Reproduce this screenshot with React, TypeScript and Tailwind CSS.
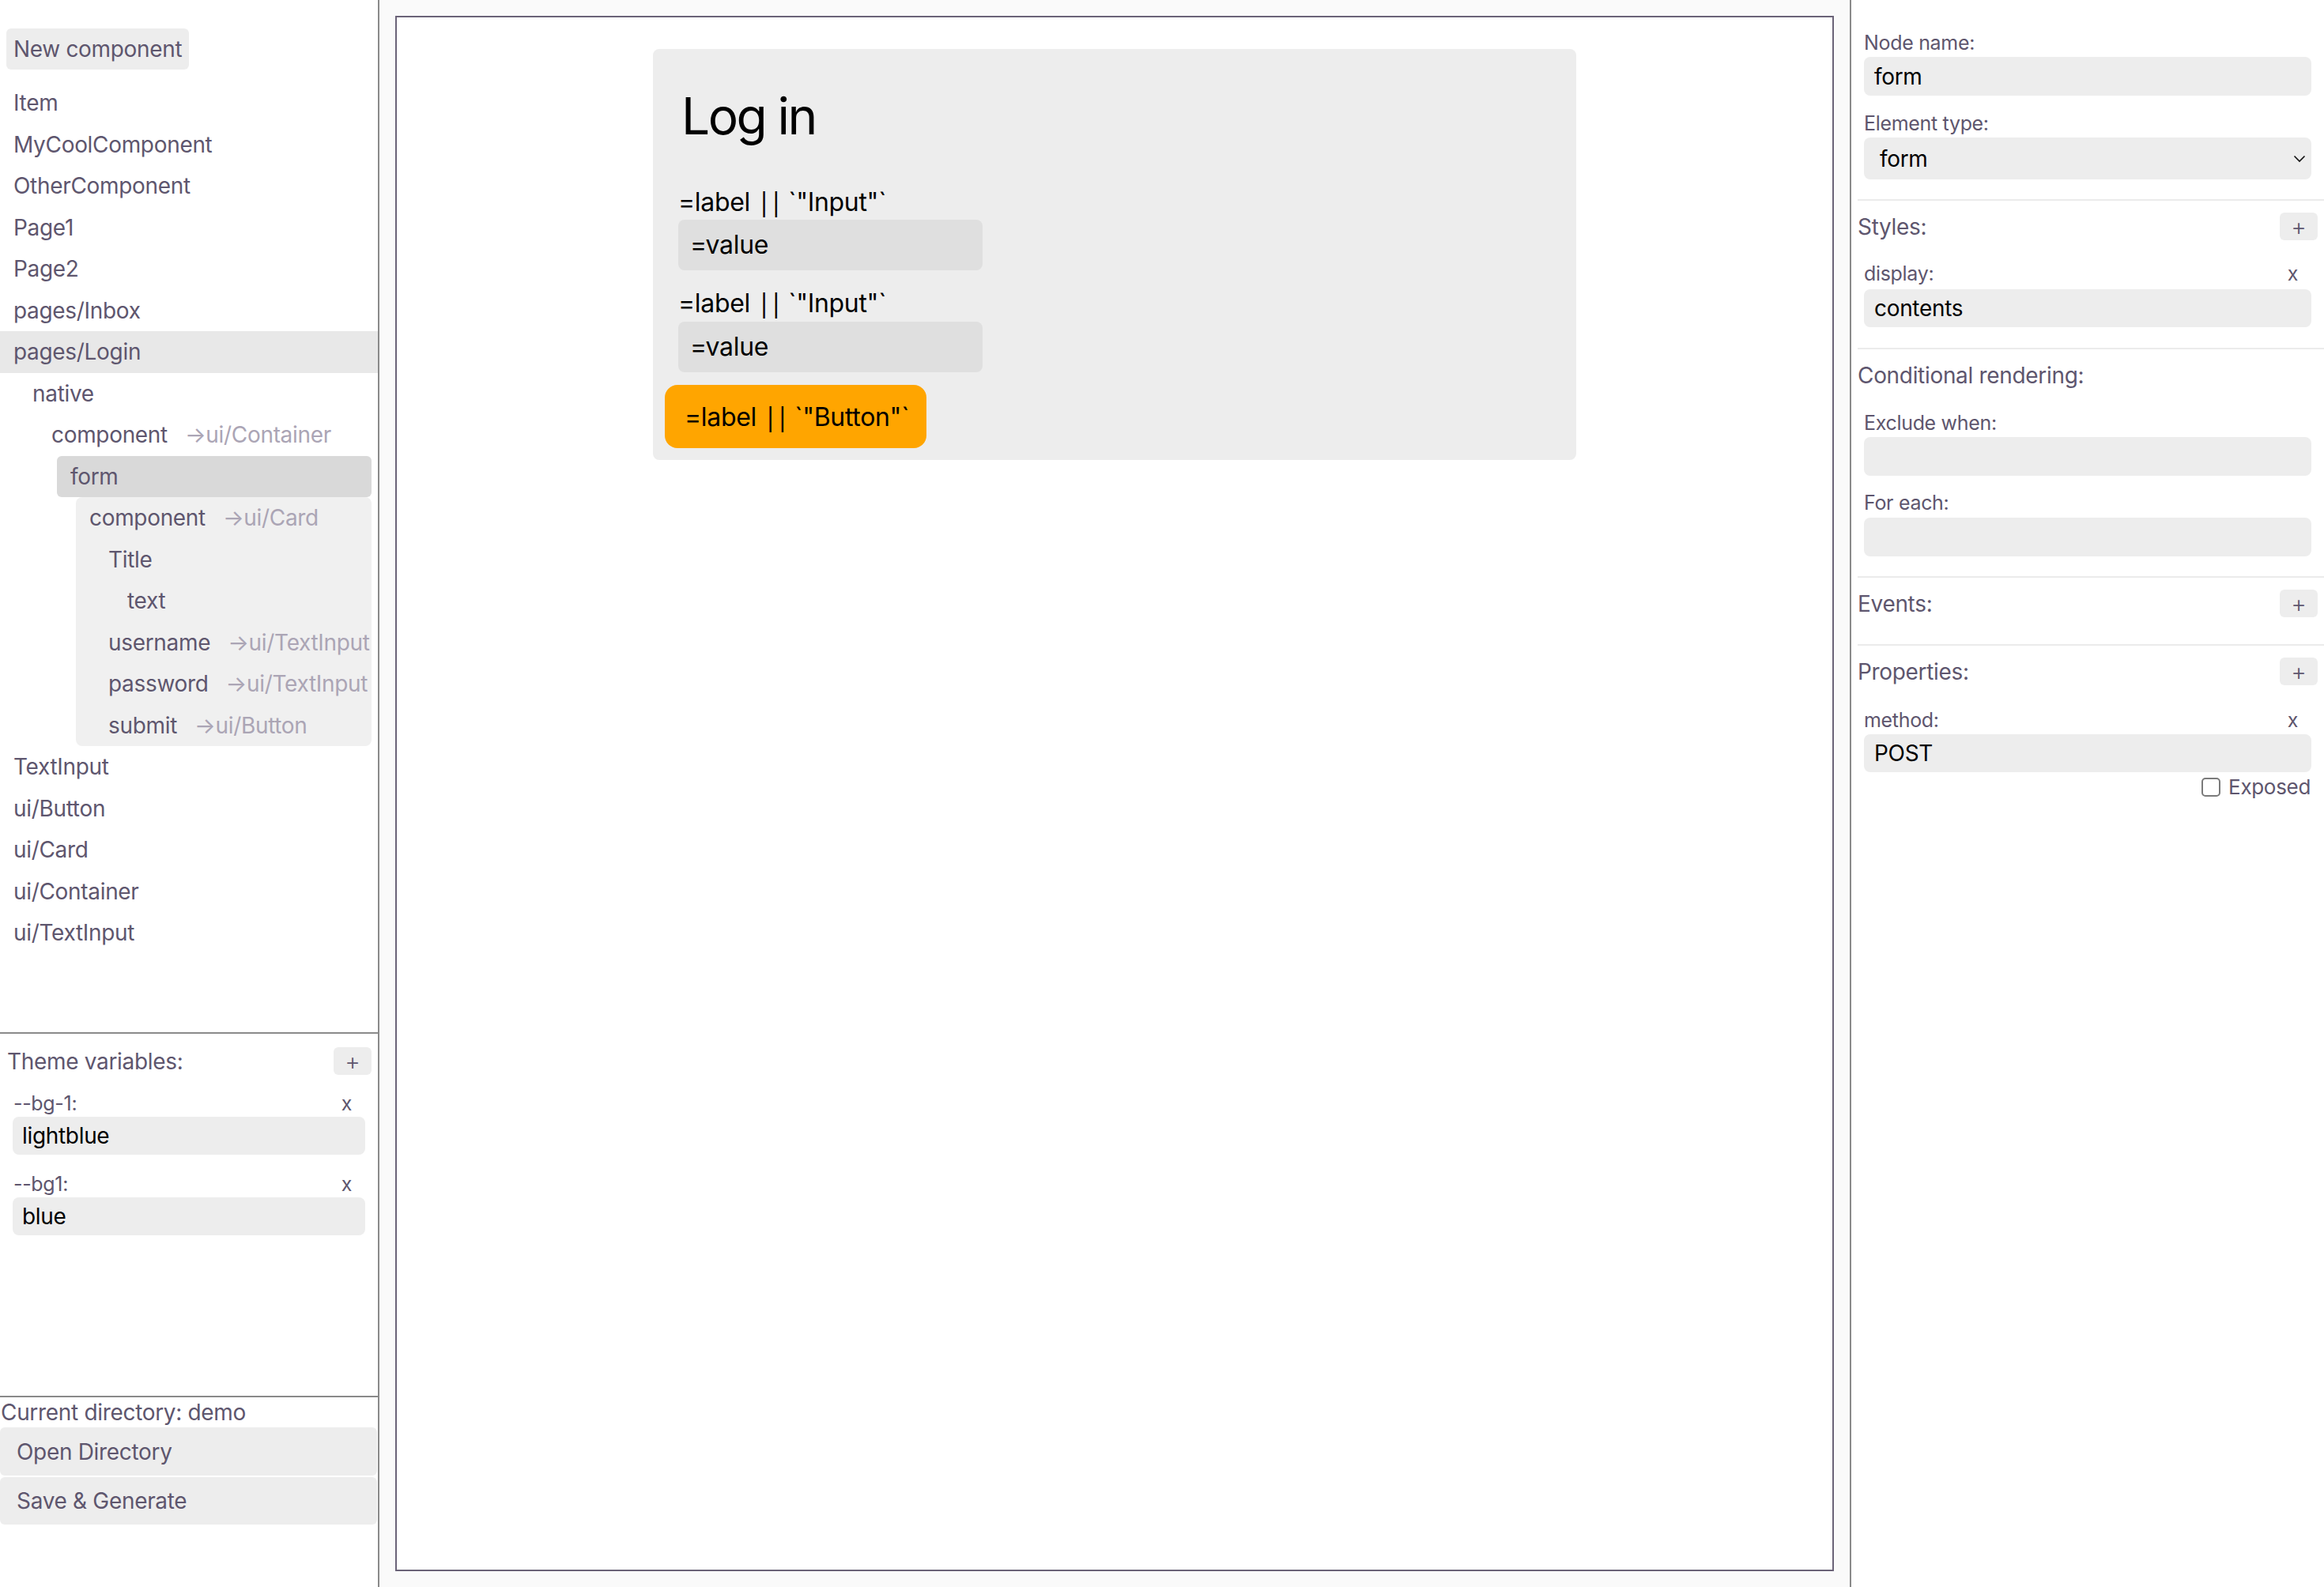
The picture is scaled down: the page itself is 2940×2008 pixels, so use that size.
import React from 'react';

// left tree: rows share one pitch, indent 24px per level
const ROW = 'flex h-[52.5px] items-center whitespace-nowrap text-[28px]';

type TreeRow = { label: string; pad: string; ref?: string };

const topItems = ['Item', 'MyCoolComponent', 'OtherComponent', 'Page1', 'Page2', 'pages/Inbox'];
const bottomItems = ['TextInput', 'ui/Button', 'ui/Card', 'ui/Container', 'ui/TextInput'];

const children: TreeRow[] = [
  { label: 'component', pad: 'pl-[17px]', ref: 'ui/Card' },
  { label: 'Title', pad: 'pl-[41px]' },
  { label: 'text', pad: 'pl-[65px]' },
  { label: 'username', pad: 'pl-[41px]', ref: 'ui/TextInput' },
  { label: 'password', pad: 'pl-[41px]', ref: 'ui/TextInput' },
  { label: 'submit', pad: 'pl-[41px]', ref: 'ui/Button' },
];

const Ref: React.FC<{ to: string }> = ({ to }) => (
  <span className="ml-[22px] text-[#aba5b5]">→{to}</span>
);

// Inter draws the double bar heavy, so the pipes get a plainer face
const Expr: React.FC<{ name: string }> = ({ name }) => (
  <span className="whitespace-pre">
    {'=label '}
    <span className="tracking-[-0.07em] [font-family:'Noto_Sans',sans-serif]">||</span>
    {` \`"${name}"\``}
  </span>
);

const PlusButton: React.FC = () => (
  <button
    type="button"
    className="flex h-[35px] w-[48px] items-center justify-center rounded-[6px] bg-[#ededed] text-[30px] font-light leading-none text-[#5e566e]"
  >
    +
  </button>
);

const Field: React.FC<{ label: string; value?: string; x?: boolean; h?: string; mt?: string }> = ({
  label,
  value = '',
  x = false,
  h = 'h-[48px]',
  mt = 'mt-[2px]',
}) => (
  <div className="mr-[16px] ml-[8px]">
    <div className="flex h-[32px] items-center justify-between pr-[17px] text-[25px] leading-[32px]">
      <span>{label}</span>
      {x && <span>x</span>}
    </div>
    <div className={`${mt} ${h} flex items-center rounded-[8px] bg-[#ededed] pl-[13px] text-[28px] text-black`}>
      {value}
    </div>
  </div>
);

const SectionHeader: React.FC<{ title: string; plus?: boolean }> = ({ title, plus = true }) => (
  <div className="flex h-[35px] items-center justify-between pr-[8px] text-[28px]">
    <span>{title}</span>
    {plus && <PlusButton />}
  </div>
);

const Sidebar: React.FC = () => (
  <aside className="flex w-[480px] shrink-0 flex-col border-r-2 border-[#8a8a8a]">
    {/* component tree */}
    <div className="h-[1306px] shrink-0">
      <div className="pt-[36px] pl-[8px]">
        <button
          type="button"
          className="flex h-[52px] items-center rounded-[6px] bg-[#ededed] px-[9px] text-[28px]"
        >
          New component
        </button>
      </div>
      <div className="mt-[16px]">
        {topItems.map((item) => (
          <div key={item} className={`${ROW} pl-[17px]`}>
            {item}
          </div>
        ))}
        <div className={`${ROW} bg-[#e8e8e8] pl-[17px]`}>pages/Login</div>
        <div className={`${ROW} pl-[41px]`}>native</div>
        <div className={`${ROW} pl-[65px]`}>
          component
          <Ref to="ui/Container" />
        </div>
        <div className={`${ROW} mr-[8px] ml-[72px] rounded-[6px] bg-[#d9d9d9] pl-[17px]`}>form</div>
        <div className="mr-[8px] ml-[96px] rounded-[8px] bg-[#f0f0f0]">
          {children.map((c) => (
            <div key={c.label} className={`${ROW} ${c.pad}`}>
              {c.label}
              {c.ref && <Ref to={c.ref} />}
            </div>
          ))}
        </div>
        {bottomItems.map((item) => (
          <div key={item} className={`${ROW} pl-[17px]`}>
            {item}
          </div>
        ))}
      </div>
    </div>

    {/* theme variables */}
    <div className="h-[460px] shrink-0 border-t-2 border-[#8a8a8a] px-[8px] pt-[17px]">
      <div className="flex h-[35px] items-center justify-between pl-[1px] text-[28px]">
        <span>Theme variables:</span>
        <PlusButton />
      </div>
      <div className="mt-[20px] px-[8px]">
        <div className="flex h-[32px] items-center justify-between pr-[17px] pl-[1px] text-[25px] leading-[32px]">
          <span>--bg-1:</span>
          <span>x</span>
        </div>
        <div className="mt-[1px] flex h-[48px] items-center rounded-[8px] bg-[#ededed] pl-[12px] text-[28px] text-black">
          lightblue
        </div>
        <div className="mt-[21px] flex h-[32px] items-center justify-between pr-[17px] pl-[1px] text-[25px] leading-[32px]">
          <span>--bg1:</span>
          <span>x</span>
        </div>
        <div className="mt-[1px] flex h-[48px] items-center rounded-[8px] bg-[#ededed] pl-[12px] text-[28px] text-black">
          blue
        </div>
      </div>
    </div>

    {/* directory */}
    <div className="flex-1 border-t-2 border-[#8a8a8a]">
      <div className="pl-[1px] text-[28px] leading-[38px]">Current directory: demo</div>
      <div className="mr-[1px] flex flex-col gap-[2px]">
        <button type="button" className="flex h-[61px] items-center rounded-[6px] bg-[#ededed] pl-[21px] text-[28px]">
          Open Directory
        </button>
        <button type="button" className="flex h-[60px] items-center rounded-[6px] bg-[#ededed] pl-[21px] text-[28px]">
          Save &amp; Generate
        </button>
      </div>
    </div>
  </aside>
);

const Canvas: React.FC = () => (
  <main className="flex-1 bg-[#fafafa] p-[20px]">
    <div className="h-full border-2 border-[#6b6378] bg-white">
      <div className="mx-auto mt-[40px] w-[1168px] rounded-[8px] bg-[#ededed] pt-[16px] pr-[15px] pb-[15px] pl-[15px] text-black">
        <h1 className="mt-[37px] ml-[21px] h-[64px] text-[64px] leading-[64px] tracking-[-0.04em]">Log in</h1>
        <div className="mt-[56px] ml-[17px] text-[32px] leading-[40px]">
          <Expr name="Input" />
        </div>
        <div className="mt-[2px] ml-[17px] flex h-[64px] w-[385px] items-center rounded-[8px] bg-[#dfdfdf] pl-[15px] text-[32px]">
          =value
        </div>
        <div className="mt-[21px] ml-[17px] text-[32px] leading-[40px]">
          <Expr name="Input" />
        </div>
        <div className="mt-[3px] ml-[17px] flex h-[64px] w-[385px] items-center rounded-[8px] bg-[#dfdfdf] pl-[15px] text-[32px]">
          =value
        </div>
        <button
          type="button"
          className="mt-[16px] flex h-[80px] w-[331px] items-center rounded-[16px] bg-[#ffa500] pl-[25px] text-[32px]"
        >
          <Expr name="Button" />
        </button>
      </div>
    </div>
  </main>
);

const Inspector: React.FC = () => (
  <aside className="w-[600px] shrink-0 border-l-2 border-[#8a8a8a] bg-white">
    <div className="ml-[8px] pt-[38px] pb-[25px]">
      <Field label="Node name:" value="form" h="h-[49px]" />
      <div className="mt-[19px] mr-[16px] ml-[8px]">
        <div className="flex h-[32px] items-center text-[25px] leading-[32px]">Element type:</div>
        <div className="mt-[2px] flex h-[53px] items-center justify-between rounded-[8px] bg-[#ededed] pr-[7px] pl-[20px] text-[28px] text-black">
          <span>form</span>
          <svg width="16" height="10" viewBox="0 0 16 10" fill="none">
            <path d="M1.5 1.5 L8 8 L14.5 1.5" stroke="#111" strokeWidth="1.6" />
          </svg>
        </div>
      </div>
    </div>

    <div className="ml-[8px] border-t-2 border-[#ebebeb] pt-[15px] pb-[26px]">
      <SectionHeader title="Styles:" />
      <div className="mt-[26px]">
        <Field label="display:" value="contents" x mt="mt-[4px]" />
      </div>
    </div>

    <div className="ml-[8px] border-t-2 border-[#ebebeb] pt-[15px] pb-[25px]">
      <SectionHeader title="Conditional rendering:" plus={false} />
      <div className="mt-[27px]">
        <Field label="Exclude when:" h="h-[49px]" />
      </div>
      <div className="mt-[18px]">
        <Field label="For each:" h="h-[49px]" mt="mt-[3px]" />
      </div>
    </div>

    <div className="ml-[8px] border-t-2 border-[#ebebeb] pt-[15px] pb-[34px]">
      <SectionHeader title="Events:" />
    </div>

    <div className="ml-[8px] border-t-2 border-[#ebebeb] pt-[15px]">
      <SectionHeader title="Properties:" />
      <div className="mt-[28px]">
        <Field label="method:" value="POST" x />
      </div>
      <div className="mt-[6px] mr-[17px] flex h-[25px] items-center justify-end gap-[10px] text-[26px]">
        <span className="h-[24px] w-[24px] rounded-[5px] border-2 border-[#7a7a7a] bg-white" />
        <span>Exposed</span>
      </div>
    </div>
  </aside>
);

export default function App() {
  return (
    <div className="flex h-[2008px] w-[2940px] overflow-hidden bg-white tracking-[-0.02em] text-[#5e566e] [font-family:Inter,'Noto_Sans',sans-serif] [font-feature-settings:'calt'_0,'liga'_0]">
      <Sidebar />
      <Canvas />
      <Inspector />
    </div>
  );
}
